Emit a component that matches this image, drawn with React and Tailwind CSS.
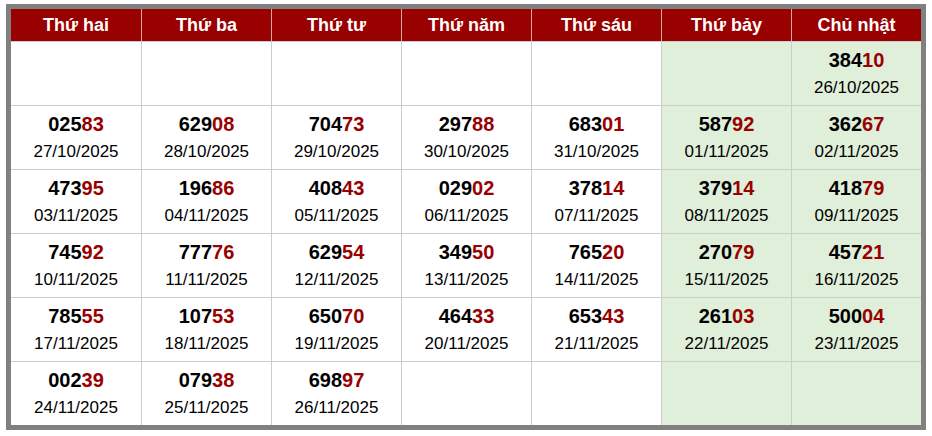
import React from "react";

const days = ["Thứ hai", "Thứ ba", "Thứ tư", "Thứ năm", "Thứ sáu", "Thứ bảy", "Chủ nhật"];

const rows = [
  [null, null, null, null, null, null, ["38410", "26/10/2025"]],
  [["02583", "27/10/2025"], ["62908", "28/10/2025"], ["70473", "29/10/2025"], ["29788", "30/10/2025"], ["68301", "31/10/2025"], ["58792", "01/11/2025"], ["36267", "02/11/2025"]],
  [["47395", "03/11/2025"], ["19686", "04/11/2025"], ["40843", "05/11/2025"], ["02902", "06/11/2025"], ["37814", "07/11/2025"], ["37914", "08/11/2025"], ["41879", "09/11/2025"]],
  [["74592", "10/11/2025"], ["77776", "11/11/2025"], ["62954", "12/11/2025"], ["34950", "13/11/2025"], ["76520", "14/11/2025"], ["27079", "15/11/2025"], ["45721", "16/11/2025"]],
  [["78555", "17/11/2025"], ["10753", "18/11/2025"], ["65070", "19/11/2025"], ["46433", "20/11/2025"], ["65343", "21/11/2025"], ["26103", "22/11/2025"], ["50004", "23/11/2025"]],
  [["00239", "24/11/2025"], ["07938", "25/11/2025"], ["69897", "26/11/2025"], null, null, null, null],
];

export default function App() {
  return (
    <div className="w-[932px] h-[436px] bg-white pt-[4px] pl-[6px] font-['Liberation_Sans',Arial,sans-serif]">
      <div className="w-[920px] border-[5px] border-[#808080] grid grid-cols-[repeat(7,130px)]">
        {days.map((d, j) => (
          <div
            key={d}
            className={`h-[32px] bg-[#990000] text-white text-[18px] font-bold flex items-center justify-center ${j > 0 ? "border-l border-[#d9a6a6]" : ""}`}
          >
            {d}
          </div>
        ))}
        {rows.map((row, i) =>
          row.map((c, j) => (
            <div
              key={`${i}-${j}`}
              className={`h-[64px] border-t border-[#cccccc] flex flex-col items-center justify-center ${j > 0 ? "border-l" : ""} ${j >= 5 ? "bg-[#e0efda]" : "bg-white"}`}
            >
              {c && (
                <>
                  <div className="text-[20px] font-bold leading-[27px] text-black">
                    {c[0].slice(0, 3)}
                    <span className="text-[#990000]">{c[0].slice(3)}</span>
                  </div>
                  <div className="text-[17px] leading-[27px] text-black">{c[1]}</div>
                </>
              )}
            </div>
          ))
        )}
      </div>
    </div>
  );
}
